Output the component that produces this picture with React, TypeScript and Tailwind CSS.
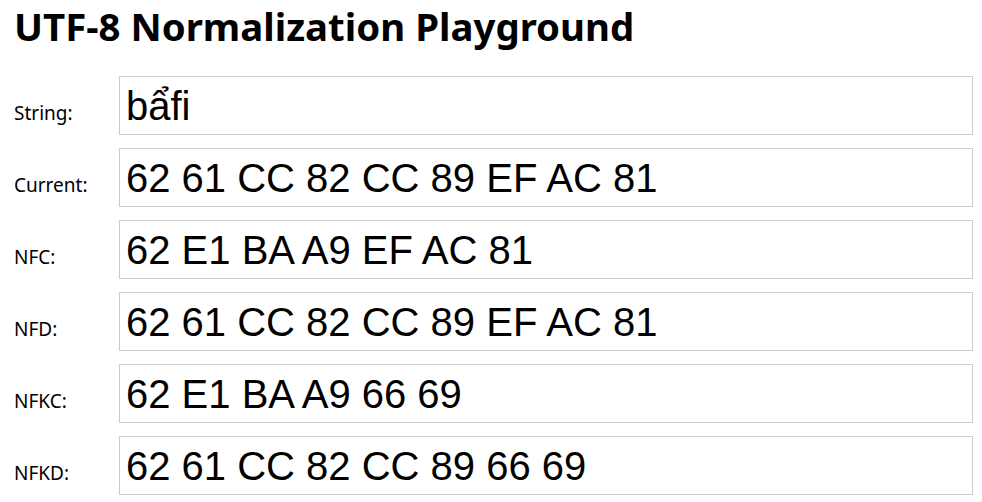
import React from "react";

const rows: { label: string; value: string }[] = [
  { label: "String:", value: "bẩfi" },
  { label: "Current:", value: "62 61 CC 82 CC 89 EF AC 81" },
  { label: "NFC:", value: "62 E1 BA A9 EF AC 81" },
  { label: "NFD:", value: "62 61 CC 82 CC 89 EF AC 81" },
  { label: "NFKC:", value: "62 E1 BA A9 66 69" },
  { label: "NFKD:", value: "62 61 CC 82 CC 89 66 69" },
];

export default function App() {
  return (
    <div className="min-h-[502px] w-[982px] bg-white pl-[14px] pr-[9px] text-black">
      <h1 className="text-[38.4px] font-bold leading-[53px] tracking-[0px] [font-family:'Noto_Sans',sans-serif]">
        UTF-8 Normalization Playground
      </h1>
      <div className="mt-[23px] flex flex-col gap-[13px]">
        {rows.map((r) => (
          <div key={r.label} className="flex items-baseline">
            <div className="w-[105px] shrink-0 text-[19px] [font-family:'Noto_Sans',sans-serif]">
              {r.label}
            </div>
            <div className="flex h-[59px] flex-1 items-center border border-[#cccccc] pl-[6px] text-[40px] [font-family:'Liberation_Sans',Arial,sans-serif]">
              <span className="leading-[46px]">{r.value}</span>
            </div>
          </div>
        ))}
      </div>
    </div>
  );
}
